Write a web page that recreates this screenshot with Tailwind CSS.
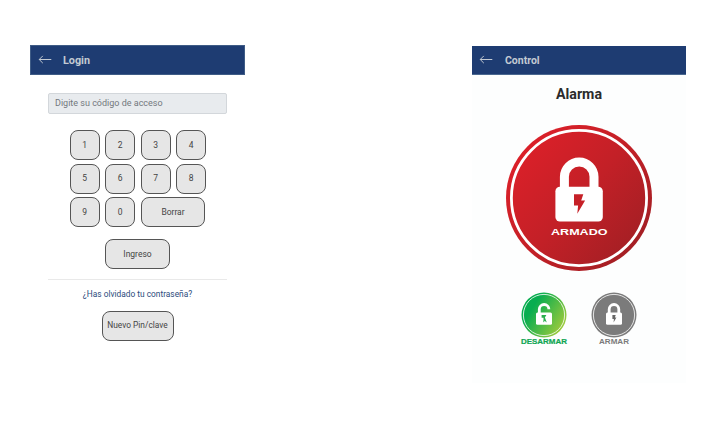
<!DOCTYPE html>
<html lang="es">
<head>
<meta charset="utf-8">
<title>Alarma</title>
<script src="https://cdn.jsdelivr.net/npm/@tailwindcss/browser@4"></script>
</head>
<body class="w-[716px] h-[428px] overflow-hidden bg-white font-['Roboto',sans-serif] text-[#444]">
<div class="flex justify-between pl-[30px] pr-[30px] pt-[45px]">
  <section class="w-[215px]">
    <header class="flex h-[30px] items-center border border-[#3f5c86] bg-[#1e3c72] pl-[7px] text-[#c3cad2]">
      <svg class="h-[10px] w-[14px]" viewBox="0 0 14 10" fill="none" stroke="currentColor" stroke-width="1"><path d="M13.3 4.5H1.2M4.8.9 1.2 4.5l3.6 3.6"/></svg>
      <h1 class="ml-[11px] pt-[2px] text-[10.8px] font-bold leading-none">Login</h1>
    </header>
    <div class="flex flex-col items-center px-[18px] pt-[18px]">
      <div class="flex h-[21px] w-[179px] items-center rounded-[2px] border border-[#d3d7db] bg-[#e8ebee] pl-[6px] text-[9px] text-[#73787d]">Digite su código de acceso</div>
      <div class="mt-[16px] grid grid-cols-[30px_30px_30px_30px] gap-x-[5.5px] gap-y-[3.5px] pl-px text-[8.5px]">
        <button class="h-[30px] rounded-[8px] border border-[#555] bg-[#e6e6e6]">1</button>
        <button class="h-[30px] rounded-[8px] border border-[#555] bg-[#e6e6e6]">2</button>
        <button class="h-[30px] rounded-[8px] border border-[#555] bg-[#e6e6e6]">3</button>
        <button class="h-[30px] rounded-[8px] border border-[#555] bg-[#e6e6e6]">4</button>
        <button class="h-[30px] rounded-[8px] border border-[#555] bg-[#e6e6e6]">5</button>
        <button class="h-[30px] rounded-[8px] border border-[#555] bg-[#e6e6e6]">6</button>
        <button class="h-[30px] rounded-[8px] border border-[#555] bg-[#e6e6e6]">7</button>
        <button class="h-[30px] rounded-[8px] border border-[#555] bg-[#e6e6e6]">8</button>
        <button class="h-[30px] rounded-[8px] border border-[#555] bg-[#e6e6e6]">9</button>
        <button class="h-[30px] rounded-[8px] border border-[#555] bg-[#e6e6e6]">0</button>
        <button class="col-span-2 mr-px h-[30px] rounded-[8px] border border-[#555] bg-[#e6e6e6]">Borrar</button>
      </div>
      <button class="mt-[12px] h-[30px] w-[65px] rounded-[8px] border border-[#555] bg-[#e6e6e6] text-[8.5px]">Ingreso</button>
      <div class="mt-[10px] h-px w-[179px] bg-[#e9e9e9]"></div>
      <a class="mt-[8px] text-[8.35px] leading-[12px] text-[#2b4a7c]">¿Has olvidado tu contraseña?</a>
      <button class="mt-[11px] h-[30px] w-[72px] whitespace-nowrap rounded-[8px] border border-[#555] bg-[#e6e6e6] pb-px text-[8.35px]">Nuevo Pin/clave</button>
    </div>
  </section>

  <section class="mt-px h-[337px] w-[214px] bg-[#fdfefe]">
    <header class="flex h-[29px] items-center border-b border-[#4a6890] bg-[#1e3c72] pl-[7px] text-[#c3cad2]">
      <svg class="h-[10px] w-[14px]" viewBox="0 0 14 10" fill="none" stroke="currentColor" stroke-width="1"><path d="M13.3 4.5H1.2M4.8.9 1.2 4.5l3.6 3.6"/></svg>
      <h1 class="ml-[12px] pt-[3px] text-[10.5px] font-bold leading-none">Control</h1>
    </header>
    <h2 class="mt-[10px] text-center text-[14.2px] font-bold leading-[18px] text-[#2b2b2b]">Alarma</h2>
    <svg class="mx-auto mt-[21px] block h-[148px] w-[148px]" viewBox="0 0 148 148">
      <defs><linearGradient id="red" x1=".1" y1=".15" x2=".9" y2=".85"><stop offset="0" stop-color="#dc2029"/><stop offset=".5" stop-color="#c32027"/><stop offset="1" stop-color="#a31f24"/></linearGradient></defs>
      <circle cx="74" cy="74" r="73" fill="url(#red)"/>
      <circle cx="74" cy="74" r="67.6" fill="none" stroke="#fff" stroke-width="2.8"/>
      <path d="M59.4 66V52.8a14.8 14.8 0 0 1 29.6 0V66" fill="none" stroke="#fff" stroke-width="9"/>
      <rect x="50.4" y="62.7" width="47.4" height="34.8" rx="4.5" fill="#fff"/>
      <path d="M69 70.3h9.3l-2.1 6.3h3.9l-7.8 13.2.8-8.4H69z" fill="#c62027"/>
      <text x="46" y="110.5" textLength="56.5" lengthAdjust="spacingAndGlyphs" font-family="Liberation Sans, sans-serif" font-weight="700" font-size="9.8" fill="#fff">ARMADO</text>
    </svg>
    <div class="mt-[19px] flex justify-center gap-[16px] pr-px">
      <svg class="h-[56px] w-[54px]" viewBox="0 0 54 56">
        <defs><linearGradient id="green" x1=".1" y1=".3" x2=".9" y2=".8"><stop offset=".15" stop-color="#08ad50"/><stop offset="1" stop-color="#9bca3c"/></linearGradient></defs>
        <circle cx="27" cy="24" r="22.5" fill="url(#green)"/>
        <circle cx="27" cy="24" r="20.6" fill="none" stroke="#fff" stroke-width=".8"/>
        <path d="M22.3 22.5v-4.2a4.8 4.8 0 0 1 9.6 0" fill="none" stroke="#fff" stroke-width="2.8"/>
        <rect x="19" y="21.5" width="16" height="12.3" rx="1.5" fill="#fff"/>
        <path d="M24.6 24h4.8l-1.5 2.6 1.9 5-3.3-2.7 0-2.2h-1.9zM28 27.5l-1 3.9-1-1.4z" fill="#29af4d"/>
        <text x="4" y="53.2" textLength="46" lengthAdjust="spacingAndGlyphs" font-family="Liberation Sans, sans-serif" font-weight="700" font-size="6.7" fill="#10a653" stroke="#10a653" stroke-width=".2">DESARMAR</text>
      </svg>
      <svg class="h-[56px] w-[54px]" viewBox="0 0 54 56">
        <circle cx="27" cy="24" r="22.5" fill="#7b7b7b"/>
        <circle cx="27" cy="24" r="20.6" fill="none" stroke="#fff" stroke-width=".8"/>
        <path d="M22.2 22.5v-4.2a4.8 4.8 0 0 1 9.6 0v4.2" fill="none" stroke="#fff" stroke-width="2.8"/>
        <rect x="19" y="21.5" width="16" height="12.3" rx="1.5" fill="#fff"/>
        <path d="M25.4 24h3.3l-.8 2.4h1.5l-2.8 5 .3-3.4h-1.5z" fill="#666"/>
        <text x="12" y="53.2" textLength="30" lengthAdjust="spacingAndGlyphs" font-family="Liberation Sans, sans-serif" font-weight="700" font-size="6.7" fill="#7b7b7b">ARMAR</text>
      </svg>
    </div>
  </section>
</div>
</body>
</html>
